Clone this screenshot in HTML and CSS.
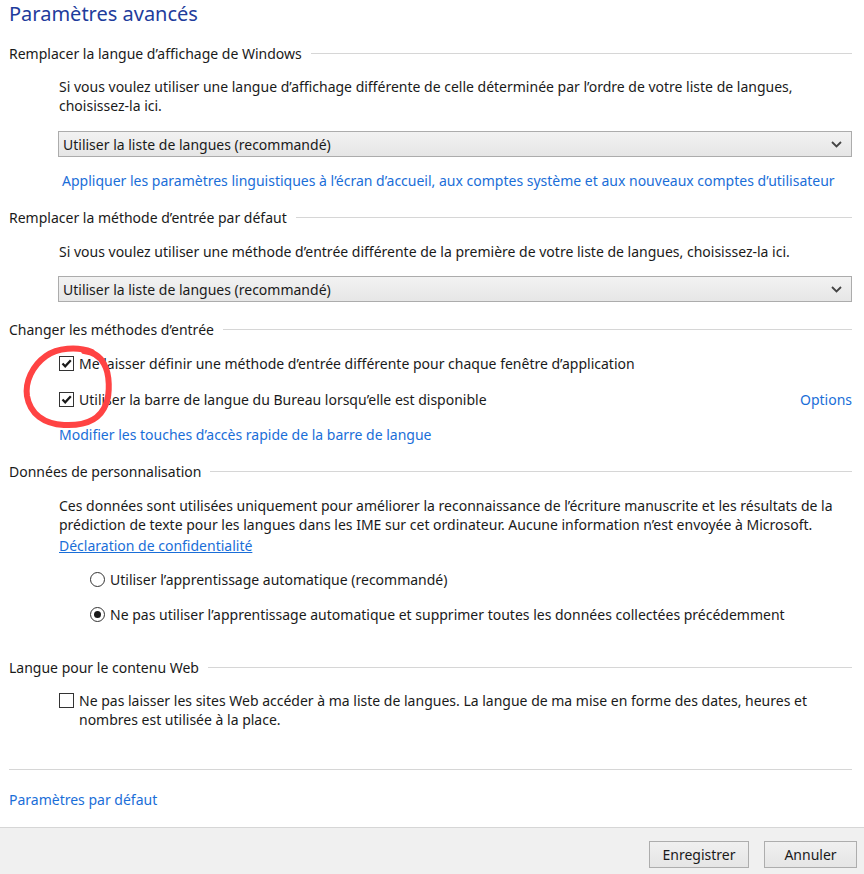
FILE: index.html
```html
<!DOCTYPE html>
<html lang="fr">
<head>
<meta charset="utf-8">
<title>Paramètres avancés</title>
<link rel="stylesheet" href="styles.css">
</head>
<body>
<div class="page">
  <main class="content">
    <h1 class="title">Paramètres avancés</h1>

    <div class="sec-head s1"><span>Remplacer la langue d’affichage de Windows</span><i class="rule"></i></div>
    <p class="para p1">Si vous voulez utiliser une langue d’affichage différente de celle déterminée par l’ordre de votre liste de langues, choisissez-la ici.</p>
    <div class="select sel1"><span>Utiliser la liste de langues (recommandé)</span><svg class="chev" width="11" height="7" viewBox="0 0 11 7"><path d="M1 1 L5.5 5.5 L10 1" fill="none" stroke="#444" stroke-width="1.8"/></svg></div>
    <a class="link l1" href="#">Appliquer les paramètres linguistiques à l’écran d’accueil, aux comptes système et aux nouveaux comptes d’utilisateur</a>

    <div class="sec-head s2"><span>Remplacer la méthode d’entrée par défaut</span><i class="rule"></i></div>
    <p class="para p2">Si vous voulez utiliser une méthode d’entrée différente de la première de votre liste de langues, choisissez-la ici.</p>
    <div class="select sel2"><span>Utiliser la liste de langues (recommandé)</span><svg class="chev" width="11" height="7" viewBox="0 0 11 7"><path d="M1 1 L5.5 5.5 L10 1" fill="none" stroke="#444" stroke-width="1.8"/></svg></div>

    <div class="sec-head s3"><span>Changer les méthodes d’entrée</span><i class="rule"></i></div>
    <div class="check-row c1"><span class="box checked"><svg width="13" height="13" viewBox="0 0 13 13"><path d="M2.5 6.5 L5.2 9.3 L10.8 3.2" fill="none" stroke="#1a1a1a" stroke-width="2.2"/></svg></span><span>Me laisser définir une méthode d’entrée différente pour chaque fenêtre d’application</span></div>
    <div class="check-row c2"><span class="box checked"><svg width="13" height="13" viewBox="0 0 13 13"><path d="M2.5 6.5 L5.2 9.3 L10.8 3.2" fill="none" stroke="#1a1a1a" stroke-width="2.2"/></svg></span><span class="grow">Utiliser la barre de langue du Bureau lorsqu’elle est disponible</span><a class="link opt" href="#">Options</a></div>
    <a class="link l2" href="#">Modifier les touches d’accès rapide de la barre de langue</a>

    <div class="sec-head s4"><span>Données de personnalisation</span><i class="rule"></i></div>
    <p class="para p4">Ces données sont utilisées uniquement pour améliorer la reconnaissance de l’écriture manuscrite et les résultats de la prédiction de texte pour les langues dans les IME sur cet ordinateur. Aucune information n’est envoyée à Microsoft.</p>
    <a class="link ul l3" href="#">Déclaration de confidentialité</a>
    <div class="radio-row r1"><span class="radio"></span><span>Utiliser l’apprentissage automatique (recommandé)</span></div>
    <div class="radio-row r2"><span class="radio on"></span><span>Ne pas utiliser l’apprentissage automatique et supprimer toutes les données collectées précédemment</span></div>

    <div class="sec-head s5"><span>Langue pour le contenu Web</span><i class="rule"></i></div>
    <div class="check-row c3"><span class="box"></span><span>Ne pas laisser les sites Web accéder à ma liste de langues. La langue de ma mise en forme des dates, heures et nombres est utilisée à la place.</span></div>

    <hr class="sep">
    <a class="link l4" href="#">Paramètres par défaut</a>

    <svg class="annot" width="100" height="86" viewBox="0 0 100 86"><path d="M70 8 C55 2 35 4 24 12 C10 22 3 38 5 52 C8 70 22 80 42 81 C62 82 78 76 84 60 C88 50 88 30 82 20 C78 12 72 8 62 7" fill="none" stroke="#ff4343" stroke-width="6" stroke-linecap="round"/></svg>
  </main>
  <footer class="footer">
    <button class="btn b-save">Enregistrer</button>
    <button class="btn b-cancel">Annuler</button>
  </footer>
</div>
</body>
</html>
```

FILE: styles.css
```css
* { box-sizing: border-box; }
html, body { margin: 0; padding: 0; background: #fff; }
body {
  font-family: "Noto Sans", "Open Sans", sans-serif;
  font-size: 14px;
  line-height: 19px;
  color: #1a1a1a;
}
.page { width: 864px; height: 874px; display: flex; flex-direction: column; overflow: hidden; }
.content { position: relative; padding: 0 12px 0 9px; flex: 1; display: flex; flex-direction: column; align-items: stretch; }
.title { margin: 0; font-weight: 400; font-size: 20px; line-height: 28px; color: #1e3c9c; }
.sec-head { display: flex; align-items: center; gap: 9px; margin-top: 18px; }
.sec-head .rule { flex: 1; height: 0; border-top: 1px solid #d6d6d6; }
.s1 { margin-top: 16px; }
.s5 { margin-top: 34px; }
.para { margin: 15px 0 0 50px; }
.p1 { margin-top: 14px; }
.select {
  margin: 15px 0 0 49px; height: 26px; border: 1px solid #acacac;
  background: linear-gradient(#f2f2f2, #e6e6e6);
  display: flex; align-items: center; justify-content: space-between; padding: 0 9px 0 4px;
}
.sel1 { margin-top: 16px; }
.link { color: #1a6ed8; text-decoration: none; display: block; }
.l1 { margin: 14px 0 0 53px; }
.check-row { display: flex; align-items: flex-start; margin: 15px 0 0 50px; }
.c2 { margin-top: 17px; }
.c3 { margin-top: 14px; }
.box {
  flex: none; width: 15px; height: 15px; border: 1px solid #333; background: #fff;
  margin: 2px 5px 0 0; display: flex; align-items: center; justify-content: center;
}
.grow { flex: 1; }
.opt { display: inline; }
.l2 { margin: 16px 0 0 50px; }
.p4 { margin-top: 15px; }
.ul { text-decoration: underline; }
.l3 { margin: 2px 0 0 50px; }
.radio-row { display: flex; align-items: flex-start; margin: 15px 0 0 81px; }
.r2 { margin-top: 16px; }
.radio {
  flex: none; width: 15px; height: 15px; border: 1px solid #333; border-radius: 50%;
  margin: 2px 5px 0 0; display: flex; align-items: center; justify-content: center; background: #fff;
}
.radio.on::after { content: ""; width: 7px; height: 7px; border-radius: 50%; background: #1a1a1a; }
.sep { margin: 40px 0 0 0; border: 0; border-top: 1px solid #d6d6d6; height: 0; }
.l4 { margin: 20px 0 0 0; }
.annot { position: absolute; left: 22px; top: 344px; }
.footer {
  height: 47px; flex: none; background: #f0f0f0; border-top: 1px solid #d6d6d6;
  display: flex; justify-content: flex-end; align-items: flex-start; padding: 13px 7px 0 0; gap: 15px;
}
.btn {
  font-family: inherit; font-size: 14px; color: #1a1a1a; height: 27px;
  border: 1px solid #adadad; background: linear-gradient(#f0f0f0, #e5e5e5); padding: 0;
}
.b-save { width: 100px; }
.b-cancel { width: 93px; }
```
